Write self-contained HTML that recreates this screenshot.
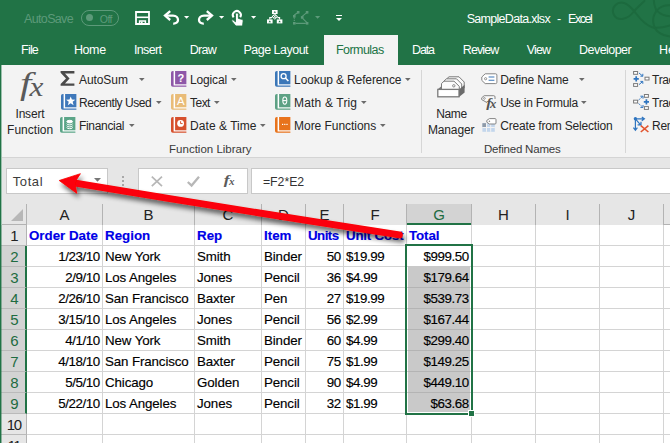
<!DOCTYPE html>
<html><head><meta charset="utf-8">
<style>
*{box-sizing:border-box;margin:0;padding:0}
html,body{width:670px;height:443px;overflow:hidden;background:#fff}
body{font-family:"Liberation Sans",sans-serif;position:relative;color:#222}
.a{position:absolute}
svg{position:absolute;overflow:visible}
#title{left:0;top:0;width:670px;height:65px;background:#217346}
.t{position:absolute;white-space:nowrap;line-height:1.15}
#ribbon{left:2px;top:65px;width:668px;height:93px;background:#f3f3f3;border-bottom:1px solid #d4d4d4}
.sep{position:absolute;width:1px;background:#d6d6d6;top:70px;height:83px}
.dd{position:absolute;width:0;height:0;border-left:3px solid transparent;border-right:3px solid transparent;border-top:3px solid #6a6a6a}
#fbar{left:2px;top:158px;width:668px;height:47px;background:#e6e6e6}
.box{position:absolute;background:#fff;border:1px solid #c8c8c8}
#grid{left:0;top:205px;width:670px;height:238px;background:#fff}
.ch{position:absolute;top:204px;height:21px;background:#e6e6e6;font-size:15px;color:#222;text-align:center;line-height:21px}
.chl{position:absolute;top:204px;height:20px;width:1px;background:#b3b3b3}
.rh{position:absolute;left:1px;width:26px;height:21px;background:#e6e6e6;font-size:15px;letter-spacing:-1.5px;color:#222;text-align:center;line-height:21.5px;border-bottom:1px solid #bababa;border-right:1px solid #b3b3b3;padding-left:0.4px}
.rh.s{background:#d3d3d3;color:#1e6b41;border-right:2px solid #217346;padding-left:1.4px}
.c{position:absolute;-webkit-text-stroke:0.15px currentColor;font-size:13.33px;letter-spacing:-0.3px;height:21px;line-height:21.5px;white-space:nowrap;color:#000}
.h{color:#0000e6;font-weight:bold;letter-spacing:0}
.vl{position:absolute;width:1px;background:#d4d4d4;top:225px;height:218px}
.hl{position:absolute;height:1px;background:#d4d4d4;left:27px;width:643px}
</style></head><body>

<div class="a" id="title"></div>
<svg style="left:0;top:0" width="670" height="40"><g fill="none" stroke="#1c6a3e" stroke-width="2" stroke-linecap="round"><path d="M644.4 1 C640 5 636 9 633.4 12 C628 19 618 22 614 15 C610 7 618 1 624 3 C630 5 633 10 636 13.5 C641 20 647 26 653 27.5 C659 28.5 665 27 670 25.5"/><path d="M653.8 0 C654 4 655 8 656.8 10.6 C660 6.5 665 5 670 5.2"/><path d="M656.8 10.6 C660 14 665 16 670 16.2"/><path d="M656.8 10.6 C653 15 652.5 20 653.8 25 C655 30 660 35 670 36.5"/></g></svg>
<div class="t" style="left:24.1px;top:11.8px;font-size:12.5px;letter-spacing:-0.67px;color:#5d9a7a;">AutoSave</div>
<div class="a" style="left:81px;top:9.5px;width:38px;height:16px;border:1px solid #5d9a7a;border-radius:8px"></div>
<div class="a" style="left:86px;top:14px;width:7px;height:7px;border-radius:4px;background:#5d9a7a"></div>
<div class="t" style="left:99.8px;top:12.6px;font-size:10.5px;letter-spacing:-0.56px;color:#5d9a7a;">Off</div>
<div class="t" style="left:466.7px;top:11.8px;font-size:12.5px;letter-spacing:-0.70px;color:#fff;">SampleData.xlsx</div>
<div class="t" style="left:557.0px;top:11.8px;font-size:12.5px;letter-spacing:-0.06px;color:#fff;">-</div>
<div class="t" style="left:568.0px;top:11.8px;font-size:12.5px;letter-spacing:-1.44px;color:#fff;">Excel</div>
<svg style="left:135px;top:11px" width="15" height="14" viewBox="0 0 15 14"><path d="M1 1 H14 V13 H1 Z" fill="none" stroke="#fff" stroke-width="1.8"/><path d="M1 6.3 H14" stroke="#fff" stroke-width="1.6"/><path d="M4.6 13 V10 H10.4 V13" fill="none" stroke="#fff" stroke-width="1.5"/><rect x="6" y="10.5" width="1.6" height="2.5" fill="#fff"/></svg>
<svg style="left:163px;top:10px" width="17" height="15" viewBox="0 0 17 15"><path d="M7.2 1.2 L2 5.6 L7.2 10" fill="none" stroke="#fff" stroke-width="2.3" stroke-linejoin="miter"/><path d="M2.5 5.6 H10 C13.5 5.6 15 8 15 10 C15 12.2 13 13.8 10.2 13.6" fill="none" stroke="#fff" stroke-width="2.3"/></svg>
<svg style="left:197px;top:10px" width="17" height="15" viewBox="0 0 17 15"><g transform="translate(17,0) scale(-1,1)"><path d="M7.2 1.2 L2 5.6 L7.2 10" fill="none" stroke="#fff" stroke-width="2.3"/><path d="M2.5 5.6 H10 C13.5 5.6 15 8 15 10 C15 12.2 13 13.8 10.2 13.6" fill="none" stroke="#fff" stroke-width="2.3"/></g></svg>
<svg style="left:184px;top:16.3px" width="6" height="4"><path d="M0 0 H5.2 L2.6 2.8 Z" fill="#fff"/></svg>
<svg style="left:218.9px;top:16.3px" width="6" height="4"><path d="M0 0 H5.2 L2.6 2.8 Z" fill="#fff"/></svg>
<svg style="left:251px;top:16.3px" width="6" height="4"><path d="M0 0 H5.2 L2.6 2.8 Z" fill="#fff"/></svg>
<svg style="left:314.8px;top:16.3px" width="6" height="4"><path d="M0 0 H5.2 L2.6 2.8 Z" fill="#5d9a7a"/></svg>
<svg style="left:230.6px;top:9.8px" width="14" height="17" viewBox="0 0 14 17"><path d="M2.6 7.4 A4 4 0 1 1 9.2 7.2" fill="none" stroke="#fff" stroke-width="2"/><path d="M4.5 4.3 a1.45 1.45 0 0 1 2.9 0 V8.4 l3.4 .9 c1 .3 1.4 1 1.3 2 L11.6 16 H4.8 L.9 11.2 c-.5-.8 .5-1.8 1.4-1.1 L4.5 11.8 Z" fill="#fff" stroke="#217346" stroke-width=".9" stroke-linejoin="round"/></svg>
<svg style="left:267px;top:10.2px" width="16" height="14" viewBox="0 0 16 14"><g fill="#fff"><rect x="5" y="0" width="5.6" height="4"/><rect x="0" y="9.4" width="5.6" height="4"/><rect x="9.8" y="9.4" width="5.6" height="4"/><path d="M7.8 3.4 L11 6.6 L7.8 9.8 L4.6 6.6 Z"/></g><g fill="none" stroke="#fff" stroke-width="1.1"><path d="M2.8 9.4 V7.6 H5 M12.6 9.4 V7.6 H10.4"/></g><g fill="#217346"><path d="M7.8 1 L9 2.8 H6.6 Z"/><path d="M2.8 10.4 L4 12.2 H1.6 Z"/><path d="M12.6 10.4 L13.8 12.2 H11.4 Z"/><rect x="7.2" y="4.6" width="1.1" height="1.1"/><rect x="6" y="6" width="1.1" height="1.1"/><rect x="8.4" y="6" width="1.1" height="1.1"/><rect x="7.2" y="7.4" width="1.1" height="1.1"/></g></svg>
<svg style="left:293.4px;top:11.2px" width="17" height="15" viewBox="0 0 17 15"><g fill="#5d9a7a" stroke="none" opacity="1"><rect x="3.9" y="0" width="2.6" height="2.6"/><rect x="12.8" y="0" width="2.6" height="2.6"/><rect x="0" y="4" width="2.6" height="2.6"/><rect x="7.9" y="5.1" width="2.6" height="2.6"/><rect x="0" y="11" width="2.6" height="2.6"/><rect x="12.8" y="11" width="2.6" height="2.6"/></g><g fill="none" stroke="#5d9a7a" stroke-width="1.1" opacity="1"><path d="M1.3 4 L5 1.5 M9.2 5.4 L14 1.4 M9.6 7.4 L14 11.6 M2.6 12.4 H12.8"/><path d="M1.3 6.6 V11" stroke-dasharray="1.2 1"/></g></svg>
<div class="a" style="left:335.5px;top:14.5px;width:6px;height:1.4px;background:#fff"></div>
<div class="dd" style="left:335.5px;top:17.6px;border-top-color:#fff;border-left-width:3px;border-right-width:3px;border-top-width:3.2px"></div>
<div class="a" style="left:324px;top:35px;width:74px;height:30px;background:#f3f3f3"></div>
<div class="t" style="left:21.1px;top:43.4px;font-size:12.5px;letter-spacing:-0.81px;color:#fff;">File</div>
<div class="t" style="left:73.9px;top:43.4px;font-size:12.5px;letter-spacing:-0.38px;color:#fff;">Home</div>
<div class="t" style="left:134.0px;top:43.4px;font-size:12.5px;letter-spacing:-0.67px;color:#fff;">Insert</div>
<div class="t" style="left:189.8px;top:43.4px;font-size:12.5px;letter-spacing:-0.76px;color:#fff;">Draw</div>
<div class="t" style="left:243.5px;top:43.4px;font-size:12.5px;letter-spacing:-0.51px;color:#fff;">Page Layout</div>
<div class="t" style="left:335.9px;top:43.4px;font-size:12.5px;letter-spacing:-0.53px;color:#217346;">Formulas</div>
<div class="t" style="left:412.0px;top:43.4px;font-size:12.5px;letter-spacing:-1.13px;color:#fff;">Data</div>
<div class="t" style="left:462.8px;top:43.4px;font-size:12.5px;letter-spacing:-0.90px;color:#fff;">Review</div>
<div class="t" style="left:526.8px;top:43.4px;font-size:12.5px;letter-spacing:-0.89px;color:#fff;">View</div>
<div class="t" style="left:579.1px;top:43.4px;font-size:12.5px;letter-spacing:-0.56px;color:#fff;">Developer</div>
<div class="t" style="left:659.1px;top:43.4px;font-size:12.5px;letter-spacing:0.00px;color:#fff;">He</div>
<div class="a" id="ribbon"></div>
<div class="sep" style="left:421px"></div>
<div class="sep" style="left:625px"></div>
<svg style="left:0;top:60px" width="60" height="50"><g font-family="Liberation Serif" font-style="italic" fill="#5a5a5a"><text transform="translate(19.9 34.2) scale(1.36 1.03)" font-size="30">f</text><text transform="translate(29.6 36) scale(1.14 1)" font-size="27.5">x</text></g></svg>
<div class="t" style="left:15.5px;top:107.5px;font-size:12px;letter-spacing:-0.20px;color:#262626;">Insert</div>
<div class="t" style="left:7.1px;top:124.1px;font-size:12px;letter-spacing:0.01px;color:#262626;">Function</div>
<div class="t" style="left:436.2px;top:107.5px;font-size:12px;letter-spacing:-0.34px;color:#262626;">Name</div>
<div class="t" style="left:427.9px;top:124.1px;font-size:12px;letter-spacing:-0.13px;color:#262626;">Manager</div>
<svg style="left:60px;top:71px" width="15" height="15" viewBox="0 0 15 15"><path d="M.6 0 H14.4 V2.4 H5 L9.6 7.4 L5 12.4 H14.4 V14.8 H.6 V13 L6 7.4 L.6 1.8 Z" fill="#4a4a4a"/></svg>
<div class="t" style="left:79.0px;top:74.1px;font-size:12px;letter-spacing:-0.08px;color:#262626;">AutoSum</div>
<svg style="left:138.7px;top:78.4px" width="7" height="4"><path d="M0 0 H5.6 L2.8 3 Z" fill="#6a6a6a"/></svg>
<div class="t" style="left:79.0px;top:96.9px;font-size:12px;letter-spacing:-0.44px;color:#262626;">Recently Used</div>
<svg style="left:155.5px;top:101.4px" width="7" height="4"><path d="M0 0 H5.6 L2.8 3 Z" fill="#6a6a6a"/></svg>
<div class="t" style="left:79.0px;top:119.9px;font-size:12px;letter-spacing:-0.32px;color:#262626;">Financial</div>
<svg style="left:128.6px;top:124.4px" width="7" height="4"><path d="M0 0 H5.6 L2.8 3 Z" fill="#6a6a6a"/></svg>
<div class="t" style="left:190.1px;top:74.1px;font-size:12px;letter-spacing:-0.17px;color:#262626;">Logical</div>
<svg style="left:230.8px;top:78.4px" width="7" height="4"><path d="M0 0 H5.6 L2.8 3 Z" fill="#6a6a6a"/></svg>
<div class="t" style="left:190.1px;top:96.9px;font-size:12px;letter-spacing:-0.57px;color:#262626;">Text</div>
<svg style="left:213.8px;top:101.4px" width="7" height="4"><path d="M0 0 H5.6 L2.8 3 Z" fill="#6a6a6a"/></svg>
<div class="t" style="left:190.1px;top:119.9px;font-size:12px;letter-spacing:0.04px;color:#262626;">Date &amp; Time</div>
<svg style="left:260px;top:124.4px" width="7" height="4"><path d="M0 0 H5.6 L2.8 3 Z" fill="#6a6a6a"/></svg>
<div class="t" style="left:294.1px;top:74.1px;font-size:12px;letter-spacing:-0.12px;color:#262626;">Lookup &amp; Reference</div>
<svg style="left:404.6px;top:78.4px" width="7" height="4"><path d="M0 0 H5.6 L2.8 3 Z" fill="#6a6a6a"/></svg>
<div class="t" style="left:294.1px;top:96.9px;font-size:12px;letter-spacing:0.16px;color:#262626;">Math &amp; Trig</div>
<svg style="left:360.5px;top:101.4px" width="7" height="4"><path d="M0 0 H5.6 L2.8 3 Z" fill="#6a6a6a"/></svg>
<div class="t" style="left:294.1px;top:119.9px;font-size:12px;letter-spacing:-0.05px;color:#262626;">More Functions</div>
<svg style="left:379.6px;top:124.4px" width="7" height="4"><path d="M0 0 H5.6 L2.8 3 Z" fill="#6a6a6a"/></svg>
<div class="t" style="left:500.2px;top:74.1px;font-size:12px;letter-spacing:-0.15px;color:#262626;">Define Name</div>
<svg style="left:578.6px;top:78.4px" width="7" height="4"><path d="M0 0 H5.6 L2.8 3 Z" fill="#6a6a6a"/></svg>
<div class="t" style="left:500.2px;top:96.9px;font-size:12px;letter-spacing:-0.26px;color:#262626;">Use in Formula</div>
<svg style="left:581.4px;top:101.4px" width="7" height="4"><path d="M0 0 H5.6 L2.8 3 Z" fill="#6a6a6a"/></svg>
<div class="t" style="left:500.2px;top:119.9px;font-size:12px;letter-spacing:-0.18px;color:#262626;">Create from Selection</div>
<div class="t" style="left:652.1px;top:74.1px;font-size:12px;letter-spacing:0.00px;color:#262626;letter-spacing:-0.35px;">Trace Precedents</div>
<div class="t" style="left:652.1px;top:96.9px;font-size:12px;letter-spacing:0.00px;color:#262626;letter-spacing:-0.35px;">Trace Dependents</div>
<div class="t" style="left:652.1px;top:119.9px;font-size:12px;letter-spacing:0.00px;color:#262626;letter-spacing:-0.35px;">Remove Arrows</div>
<div class="t" style="left:169.1px;top:143.4px;font-size:11.5px;letter-spacing:0.00px;color:#3a3a3a;">Function Library</div>
<div class="t" style="left:483.9px;top:143.4px;font-size:11.5px;letter-spacing:-0.20px;color:#3a3a3a;">Defined Names</div>
<svg style="left:60.8px;top:94px" width="16" height="16" viewBox="0 0 16 16"><rect x="2" y="0" width="13.4" height="15" fill="#fff"/><path d="M2.6 0 H1.8 A1.8 1.8 0 0 0 0 1.8 V14 A1.8 1.8 0 0 0 1.8 15.8 H15.4 V14.6 H2.6 Z" fill="#3f78ba"/><rect x="4.1" y="0" width="11.3" height="13.3" fill="#3f78ba"/><path transform="translate(9.7 7) scale(1.15) translate(-9.7 -7)" d="M9.7 3 L10.75 5.75 L13.7 5.9 L11.4 7.75 L12.2 10.6 L9.7 9 L7.2 10.6 L8 7.75 L5.7 5.9 L8.65 5.75 Z" fill="#fff"/></svg>
<svg style="left:60px;top:117px" width="16" height="16" viewBox="0 0 16 16"><rect x="2" y="0" width="13.4" height="15" fill="#fff"/><path d="M2.6 0 H1.8 A1.8 1.8 0 0 0 0 1.8 V14 A1.8 1.8 0 0 0 1.8 15.8 H15.4 V14.6 H2.6 Z" fill="#5ba588"/><rect x="4.1" y="0" width="11.3" height="13.3" fill="#5ba588"/><g fill="none" stroke="#fff" stroke-width="1"><ellipse cx="9.7" cy="4.6" rx="2.9" ry="1.3" fill="#fff"/><path d="M6.8 6.6 a2.9 1.3 0 0 0 5.8 0 M6.8 8.6 a2.9 1.3 0 0 0 5.8 0 M6.8 10.4 a2.9 1.3 0 0 0 5.8 0"/></g></svg>
<svg style="left:171.2px;top:71px" width="16" height="16" viewBox="0 0 16 16"><rect x="2" y="0" width="13.4" height="15" fill="#fff"/><path d="M2.6 0 H1.8 A1.8 1.8 0 0 0 0 1.8 V14 A1.8 1.8 0 0 0 1.8 15.8 H15.4 V14.6 H2.6 Z" fill="#8e57a8"/><rect x="4.1" y="0" width="11.3" height="13.3" fill="#8e57a8"/><text x="9.8" y="10.6" font-family="Liberation Sans" font-weight="bold" font-size="11" fill="#fff" text-anchor="middle">?</text></svg>
<svg style="left:171.2px;top:94px" width="16" height="16" viewBox="0 0 16 16"><rect x="2" y="0" width="13.4" height="15" fill="#fff"/><path d="M2.6 0 H1.8 A1.8 1.8 0 0 0 0 1.8 V14 A1.8 1.8 0 0 0 1.8 15.8 H15.4 V14.6 H2.6 Z" fill="#e9bc78"/><rect x="4.1" y="0" width="11.3" height="13.3" fill="#e9bc78"/><text x="9.8" y="10.8" font-family="Liberation Sans" font-size="11.5" fill="#fff" text-anchor="middle">A</text></svg>
<svg style="left:171.2px;top:116.8px" width="16" height="16" viewBox="0 0 16 16"><rect x="2" y="0" width="13.4" height="15" fill="#fff"/><path d="M2.6 0 H1.8 A1.8 1.8 0 0 0 0 1.8 V14 A1.8 1.8 0 0 0 1.8 15.8 H15.4 V14.6 H2.6 Z" fill="#d6502d"/><rect x="4.1" y="0" width="11.3" height="13.3" fill="#d6502d"/><circle cx="9.6" cy="6.4" r="3.4" fill="#fff"/><path d="M9.6 4.2 V6.6 H11.6" fill="none" stroke="#d6502d" stroke-width="1"/></svg>
<svg style="left:274.8px;top:71px" width="16" height="16" viewBox="0 0 16 16"><rect x="2" y="0" width="13.4" height="15" fill="#fff"/><path d="M2.6 0 H1.8 A1.8 1.8 0 0 0 0 1.8 V14 A1.8 1.8 0 0 0 1.8 15.8 H15.4 V14.6 H2.6 Z" fill="#3b77b8"/><rect x="4.1" y="0" width="11.3" height="13.3" fill="#3b77b8"/><circle cx="8.6" cy="5.2" r="2.5" fill="none" stroke="#fff" stroke-width="1.3"/><path d="M10.4 7 L13.4 10" stroke="#fff" stroke-width="1.6"/></svg>
<svg style="left:274.8px;top:94px" width="16" height="16" viewBox="0 0 16 16"><rect x="2" y="0" width="13.4" height="15" fill="#fff"/><path d="M2.6 0 H1.8 A1.8 1.8 0 0 0 0 1.8 V14 A1.8 1.8 0 0 0 1.8 15.8 H15.4 V14.6 H2.6 Z" fill="#5da184"/><rect x="4.1" y="0" width="11.3" height="13.3" fill="#5da184"/><ellipse cx="9.8" cy="6.6" rx="2" ry="3.6" fill="none" stroke="#fff" stroke-width="1.1"/><path d="M8 6.6 H11.6" stroke="#fff" stroke-width="1.1"/></svg>
<svg style="left:274.8px;top:116.8px" width="16" height="16" viewBox="0 0 16 16"><rect x="2" y="0" width="13.4" height="15" fill="#fff"/><path d="M2.6 0 H1.8 A1.8 1.8 0 0 0 0 1.8 V14 A1.8 1.8 0 0 0 1.8 15.8 H15.4 V14.6 H2.6 Z" fill="#e8731c"/><rect x="4.1" y="0" width="11.3" height="13.3" fill="#e8731c"/><rect x="7" y="6.8" width="1.2" height="1.2" fill="#fff"/><rect x="9.2" y="6.8" width="1.2" height="1.2" fill="#fff"/><rect x="11.4" y="6.8" width="1.2" height="1.2" fill="#fff"/></svg>
<svg style="left:437px;top:76px" width="29" height="22" viewBox="0 0 29 22"><g fill="#fbfbfb" stroke="#7a7a7a" stroke-width="1"><path d="M9.5 3 L12 .8 H22 L27.2 6 V12 H9.5 Z"/><path d="M7 5 L9.5 2.8 H19.5 L24.7 8 V14 H7 Z"/><path d="M4.5 7.5 L7 5.2 H17 L22.3 10.4 V14 H4.5 Z"/></g><circle cx="16.8" cy="9.8" r="1.2" fill="#fff" stroke="#7a7a7a" stroke-width=".9"/><path d="M22 13.4 L27.6 8.8 V16.4 L22 21 Z" fill="#6b6b6b"/><path d="M.8 13.2 L4 10.4 V13.2 Z" fill="#7a7a7a"/><rect x=".8" y="13.4" width="21.2" height="7.4" fill="#fff" stroke="#7a7a7a" stroke-width="1.3"/></svg>
<svg style="left:481px;top:73px" width="17" height="12" viewBox="0 0 17 12"><path d="M4.2 .8 H14.6 Q15.9 .8 15.9 2.1 V9.3 Q15.9 10.6 14.6 10.6 H4.2 L.8 7.4 V4 Z" fill="#fff" stroke="#858585" stroke-width="1"/><circle cx="4.6" cy="5.7" r="1.1" fill="#fff" stroke="#858585" stroke-width=".9"/><path d="M7.6 4 H13.4 M7.6 7.2 H13.4" stroke="#3b77b8" stroke-width="1.1"/></svg>
<svg style="left:481px;top:95px" width="16" height="15" viewBox="0 0 16 15"><path d="M6 7.6 L.7 4.6 V2.8 L3.2 .7 H12.8 Q14 .7 14 1.9 V4" fill="#f9f9f9" stroke="#858585" stroke-width="1"/><circle cx="3.4" cy="3.4" r=".9" fill="#fff" stroke="#858585" stroke-width=".8"/><g font-family="Liberation Serif" font-style="italic" font-weight="bold" fill="#555"><text transform="translate(5.2 12.2) scale(1.25 1)" font-size="12.5">f</text><text transform="translate(9 12.6) scale(1.1 1)" font-size="11.5">x</text></g></svg>
<svg style="left:482px;top:118px" width="15" height="15" viewBox="0 0 15 15"><rect x=".4" y="5.2" width="12.4" height="8.6" fill="#c3d6ec"/><path d="M.4 9.5 H12.8 M4.5 5.2 V13.8 M8.7 5.2 V13.8" stroke="#f3f3f3" stroke-width="1"/><rect x=".4" y="5.2" width="3.6" height="3.8" fill="#8e9aa8"/><path d="M7.4 .6 H13 Q14 .6 14 1.6 V5 Q14 6 13 6 H7.4 L4.8 4.2 V2.4 Z" fill="#fff" stroke="#858585" stroke-width="1"/><circle cx="7.4" cy="3.3" r=".8" fill="#858585"/></svg>
<svg style="left:633px;top:71px" width="17" height="16" viewBox="0 0 17 16"><g fill="#fff" stroke="#7a7a7a" stroke-width="1"><rect x=".6" y=".5" width="4" height="2.8"/><rect x=".6" y="12.6" width="4" height="2.8"/><rect x="12" y="6.2" width="4" height="2.8"/></g><path d="M.6 7.8 H5.8 M3.2 5.2 V10.4" stroke="#2f75c0" stroke-width="1.7"/><g fill="none" stroke="#2f75c0" stroke-width="1"><path d="M6 2 L9.6 5 M9.8 2.8 V5.2 H7.4"/><path d="M6 13.6 L9.6 10.6 M9.8 12.8 V10.4 H7.4"/></g></svg>
<svg style="left:633px;top:94px" width="17" height="16" viewBox="0 0 17 16"><g fill="#fff" stroke="#7a7a7a" stroke-width="1"><rect x="11.4" y=".5" width="4" height="2.8"/><rect x="11.4" y="12.6" width="4" height="2.8"/><rect x=".6" y="6.2" width="4" height="2.8"/></g><path d="M10.8 7.8 H16 M13.4 5.2 V10.4" stroke="#2f75c0" stroke-width="1.7"/><g fill="none" stroke="#2f75c0" stroke-width="1" stroke-dasharray="1.6 1"><path d="M5.6 6 L9.6 2.6"/><path d="M5.6 9.6 L9.6 13"/></g><path d="M7.4 2.2 H10 V4.6 M7.4 13.4 H10 V11" fill="none" stroke="#2f75c0" stroke-width="1"/></svg>
<svg style="left:633px;top:117px" width="17" height="16" viewBox="0 0 17 16"><circle cx="2.4" cy="1.8" r="1.7" fill="#2f75c0"/><g fill="none" stroke="#2f75c0" stroke-width="1.2"><path d="M2.4 2 V13 M.4 10.6 L2.4 13.2 L4.4 10.6"/><path d="M2.4 1.8 H11 M8.8 0 L11.4 1.8 L8.8 3.8"/><path d="M2.4 1.8 L8 8.4 M4.6 7.8 H8 V4.8"/></g><path d="M7.8 8.6 L15.4 15 M15.4 8.6 L7.8 15" stroke="#e2552f" stroke-width="1.6"/></svg>
<div class="a" id="fbar"></div>
<div class="box" style="left:6px;top:168px;width:102px;height:26px"></div>
<div class="t" style="left:12.7px;top:174.7px;font-size:13px;letter-spacing:0.61px;color:#3c3c3c;">Total</div>
<div class="dd" style="left:94px;top:178.4px;display:none"></div>
<svg style="left:94px;top:178.1px" width="8" height="5"><path d="M0 0 H7 L3.5 3.7 Z" fill="#777"/></svg>
<div class="a" style="left:122px;top:176px;width:2px;height:2px;background:#a8a8a8"></div>
<div class="a" style="left:122px;top:180px;width:2px;height:2px;background:#a8a8a8"></div>
<div class="a" style="left:122px;top:184px;width:2px;height:2px;background:#a8a8a8"></div>
<div class="box" style="left:138px;top:168px;width:110px;height:26px"></div>
<svg style="left:151px;top:176px" width="12" height="11" viewBox="0 0 12 11"><path d="M.8 .6 L11 10.2 M11 .6 L.8 10.2" stroke="#b7b7b7" stroke-width="1.7"/></svg>
<svg style="left:187px;top:176px" width="13" height="11" viewBox="0 0 13 11"><path d="M.8 6 L4.6 9.6 L12 .8" fill="none" stroke="#b7b7b7" stroke-width="2.3"/></svg>
<svg style="left:220px;top:168px" width="24" height="24"><g font-family="Liberation Serif" font-style="italic" font-weight="bold" fill="#5a5a5a"><text transform="translate(3.8 16.2) scale(1.3 1)" font-size="13.5">f</text><text transform="translate(9 16.6) scale(1.05 1)" font-size="10.5">x</text></g></svg>
<div class="box" style="left:251px;top:168px;width:421px;height:26px"></div>
<div class="t" style="left:262.9px;top:175.3px;font-size:12.3px;letter-spacing:-0.01px;color:#333;">=F2*E2</div>
<div class="a" id="grid"></div>
<div class="a" style="left:2px;top:204px;width:668px;height:21px;background:#e6e6e6;border-bottom:1px solid #b3b3b3"></div>
<div class="ch" style="left:27px;width:75px">A</div>
<div class="ch" style="left:103px;width:91px">B</div>
<div class="ch" style="left:195px;width:66px">C</div>
<div class="ch" style="left:262px;width:43px">D</div>
<div class="ch" style="left:306px;width:37px">E</div>
<div class="ch" style="left:344px;width:62px">F</div>
<div class="ch" style="left:407px;width:64px;background:#d3d3d3;color:#1e6b41;border-bottom:2px solid #217346">G</div>
<div class="ch" style="left:472px;width:63px">H</div>
<div class="ch" style="left:536px;width:63px">I</div>
<div class="ch" style="left:600px;width:63px">J</div>
<div class="chl" style="left:26px"></div>
<div class="chl" style="left:102px"></div>
<div class="chl" style="left:194px"></div>
<div class="chl" style="left:261px"></div>
<div class="chl" style="left:305px"></div>
<div class="chl" style="left:343px"></div>
<div class="chl" style="left:406px"></div>
<div class="chl" style="left:471px"></div>
<div class="chl" style="left:535px"></div>
<div class="chl" style="left:599px"></div>
<div class="chl" style="left:663px"></div>
<svg style="left:10px;top:208px" width="14" height="14"><path d="M13 1 L13 13 L1 13 Z" fill="#b7b7b7"/></svg>
<div class="rh" style="top:225px">1</div>
<div class="rh s" style="top:246px">2</div>
<div class="rh s" style="top:267px">3</div>
<div class="rh s" style="top:288px">4</div>
<div class="rh s" style="top:309px">5</div>
<div class="rh s" style="top:330px">6</div>
<div class="rh s" style="top:351px">7</div>
<div class="rh s" style="top:372px">8</div>
<div class="rh s" style="top:393px">9</div>
<div class="rh" style="top:414px">10</div>
<div class="rh" style="top:435px">11</div>
<div class="vl" style="left:102px"></div>
<div class="vl" style="left:194px"></div>
<div class="vl" style="left:261px"></div>
<div class="vl" style="left:305px"></div>
<div class="vl" style="left:343px"></div>
<div class="vl" style="left:406px"></div>
<div class="vl" style="left:471px"></div>
<div class="vl" style="left:535px"></div>
<div class="vl" style="left:599px"></div>
<div class="vl" style="left:663px"></div>
<div class="hl" style="top:245px"></div>
<div class="hl" style="top:266px"></div>
<div class="hl" style="top:287px"></div>
<div class="hl" style="top:308px"></div>
<div class="hl" style="top:329px"></div>
<div class="hl" style="top:350px"></div>
<div class="hl" style="top:371px"></div>
<div class="hl" style="top:392px"></div>
<div class="hl" style="top:413px"></div>
<div class="hl" style="top:434px"></div>
<div class="hl" style="top:455px"></div>
<div class="a" style="left:408px;top:266px;width:62px;height:146px;background:#c9c9c9"></div>
<div class="a" style="left:408px;top:287px;width:62px;height:1px;background:#b4b4b4"></div>
<div class="a" style="left:408px;top:308px;width:62px;height:1px;background:#b4b4b4"></div>
<div class="a" style="left:408px;top:329px;width:62px;height:1px;background:#b4b4b4"></div>
<div class="a" style="left:408px;top:350px;width:62px;height:1px;background:#b4b4b4"></div>
<div class="a" style="left:408px;top:371px;width:62px;height:1px;background:#b4b4b4"></div>
<div class="a" style="left:408px;top:392px;width:62px;height:1px;background:#b4b4b4"></div>
<div class="c h" style="left:29px;top:225px;letter-spacing:0px">Order Date</div>
<div class="c h" style="left:105px;top:225px;letter-spacing:0px">Region</div>
<div class="c h" style="left:197px;top:225px;letter-spacing:0px">Rep</div>
<div class="c h" style="left:264px;top:225px;letter-spacing:0px">Item</div>
<div class="c h" style="left:308px;top:225px;letter-spacing:-0.55px">Units</div>
<div class="c h" style="left:346px;top:225px;letter-spacing:-0.2px">Unit Cost</div>
<div class="c h" style="left:409px;top:225px;letter-spacing:-0.1px">Total</div>
<div class="c" style="left:27px;width:72.8px;top:246px;text-align:right;letter-spacing:-0.4px">1/23/10</div>
<div class="c" style="left:105px;top:246px;letter-spacing:-0.12px">New York</div>
<div class="c" style="left:197px;top:246px;letter-spacing:-0.12px">Smith</div>
<div class="c" style="left:264px;top:246px;letter-spacing:-0.12px">Binder</div>
<div class="c" style="left:306px;width:34.8px;top:246px;text-align:right;letter-spacing:-0.4px">50</div>
<div class="c" style="left:346px;top:246px;letter-spacing:-0.4px">$19.99</div>
<div class="c" style="left:407px;width:61.8px;top:246px;text-align:right;letter-spacing:-0.4px">$999.50</div>
<div class="c" style="left:27px;width:72.8px;top:267px;text-align:right;letter-spacing:-0.4px">2/9/10</div>
<div class="c" style="left:105px;top:267px;letter-spacing:-0.12px">Los Angeles</div>
<div class="c" style="left:197px;top:267px;letter-spacing:-0.12px">Jones</div>
<div class="c" style="left:264px;top:267px;letter-spacing:-0.12px">Pencil</div>
<div class="c" style="left:306px;width:34.8px;top:267px;text-align:right;letter-spacing:-0.4px">36</div>
<div class="c" style="left:346px;top:267px;letter-spacing:-0.4px">$4.99</div>
<div class="c" style="left:407px;width:61.8px;top:267px;text-align:right;letter-spacing:-0.4px">$179.64</div>
<div class="c" style="left:27px;width:72.8px;top:288px;text-align:right;letter-spacing:-0.4px">2/26/10</div>
<div class="c" style="left:105px;top:288px;letter-spacing:-0.12px">San Francisco</div>
<div class="c" style="left:197px;top:288px;letter-spacing:-0.12px">Baxter</div>
<div class="c" style="left:264px;top:288px;letter-spacing:-0.12px">Pen</div>
<div class="c" style="left:306px;width:34.8px;top:288px;text-align:right;letter-spacing:-0.4px">27</div>
<div class="c" style="left:346px;top:288px;letter-spacing:-0.4px">$19.99</div>
<div class="c" style="left:407px;width:61.8px;top:288px;text-align:right;letter-spacing:-0.4px">$539.73</div>
<div class="c" style="left:27px;width:72.8px;top:309px;text-align:right;letter-spacing:-0.4px">3/15/10</div>
<div class="c" style="left:105px;top:309px;letter-spacing:-0.12px">Los Angeles</div>
<div class="c" style="left:197px;top:309px;letter-spacing:-0.12px">Jones</div>
<div class="c" style="left:264px;top:309px;letter-spacing:-0.12px">Pencil</div>
<div class="c" style="left:306px;width:34.8px;top:309px;text-align:right;letter-spacing:-0.4px">56</div>
<div class="c" style="left:346px;top:309px;letter-spacing:-0.4px">$2.99</div>
<div class="c" style="left:407px;width:61.8px;top:309px;text-align:right;letter-spacing:-0.4px">$167.44</div>
<div class="c" style="left:27px;width:72.8px;top:330px;text-align:right;letter-spacing:-0.4px">4/1/10</div>
<div class="c" style="left:105px;top:330px;letter-spacing:-0.12px">New York</div>
<div class="c" style="left:197px;top:330px;letter-spacing:-0.12px">Smith</div>
<div class="c" style="left:264px;top:330px;letter-spacing:-0.12px">Binder</div>
<div class="c" style="left:306px;width:34.8px;top:330px;text-align:right;letter-spacing:-0.4px">60</div>
<div class="c" style="left:346px;top:330px;letter-spacing:-0.4px">$4.99</div>
<div class="c" style="left:407px;width:61.8px;top:330px;text-align:right;letter-spacing:-0.4px">$299.40</div>
<div class="c" style="left:27px;width:72.8px;top:351px;text-align:right;letter-spacing:-0.4px">4/18/10</div>
<div class="c" style="left:105px;top:351px;letter-spacing:-0.12px">San Francisco</div>
<div class="c" style="left:197px;top:351px;letter-spacing:-0.12px">Baxter</div>
<div class="c" style="left:264px;top:351px;letter-spacing:-0.12px">Pencil</div>
<div class="c" style="left:306px;width:34.8px;top:351px;text-align:right;letter-spacing:-0.4px">75</div>
<div class="c" style="left:346px;top:351px;letter-spacing:-0.4px">$1.99</div>
<div class="c" style="left:407px;width:61.8px;top:351px;text-align:right;letter-spacing:-0.4px">$149.25</div>
<div class="c" style="left:27px;width:72.8px;top:372px;text-align:right;letter-spacing:-0.4px">5/5/10</div>
<div class="c" style="left:105px;top:372px;letter-spacing:-0.12px">Chicago</div>
<div class="c" style="left:197px;top:372px;letter-spacing:-0.12px">Golden</div>
<div class="c" style="left:264px;top:372px;letter-spacing:-0.12px">Pencil</div>
<div class="c" style="left:306px;width:34.8px;top:372px;text-align:right;letter-spacing:-0.4px">90</div>
<div class="c" style="left:346px;top:372px;letter-spacing:-0.4px">$4.99</div>
<div class="c" style="left:407px;width:61.8px;top:372px;text-align:right;letter-spacing:-0.4px">$449.10</div>
<div class="c" style="left:27px;width:72.8px;top:393px;text-align:right;letter-spacing:-0.4px">5/22/10</div>
<div class="c" style="left:105px;top:393px;letter-spacing:-0.12px">Los Angeles</div>
<div class="c" style="left:197px;top:393px;letter-spacing:-0.12px">Jones</div>
<div class="c" style="left:264px;top:393px;letter-spacing:-0.12px">Pencil</div>
<div class="c" style="left:306px;width:34.8px;top:393px;text-align:right;letter-spacing:-0.4px">32</div>
<div class="c" style="left:346px;top:393px;letter-spacing:-0.4px">$1.99</div>
<div class="c" style="left:407px;width:61.8px;top:393px;text-align:right;letter-spacing:-0.4px">$63.68</div>
<div class="a" style="left:405px;top:244px;width:68px;height:171px;border:2px solid #217346"></div>
<div class="a" style="left:468px;top:410px;width:7px;height:7px;background:#217346;border:1px solid #fff"></div>
<div class="a" style="left:0;top:65px;width:1px;height:378px;background:#217346"></div>
<div class="a" style="left:1px;top:65px;width:1px;height:378px;background:#217346;opacity:.45"></div>
<svg style="left:0;top:0" width="670" height="443"><defs><filter id="sh" x="-5%" y="-30%" width="110%" height="190%"><feGaussianBlur in="SourceAlpha" stdDeviation="2.6"/><feOffset dx="2" dy="4"/><feComponentTransfer><feFuncA type="linear" slope="0.6"/></feComponentTransfer><feMerge><feMergeNode/><feMergeNode in="SourceGraphic"/></feMerge></filter></defs><g filter="url(#sh)"><path d="M77 183.3 Q242.5 210.8 399.4 234.9" stroke="#fb0007" stroke-width="6.8" stroke-linecap="round" fill="none"/><path d="M59.2 180.5 L80.4 173.7 L76.2 180.2 L75.5 186.8 L76.8 193.3 Z" fill="#fb0007" stroke="#fb0007" stroke-width=".8" stroke-linejoin="round"/></g></svg>
</body></html>
